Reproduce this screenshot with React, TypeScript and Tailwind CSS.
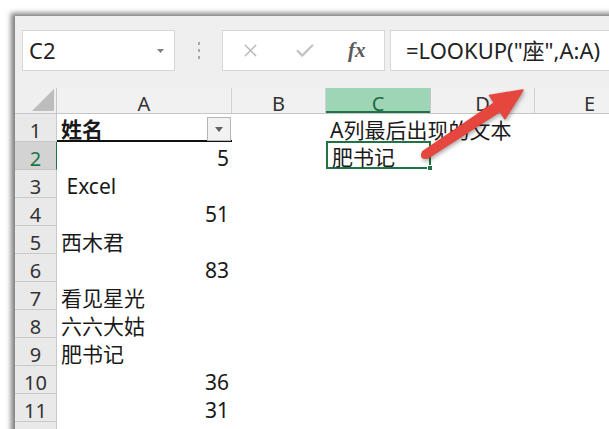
import React from 'react';
import { X, Check } from 'lucide-react';

type Row = { n: number; a?: string; aRight?: boolean; aBold?: boolean; c?: string };

const rows: Row[] = [
  { n: 1, a: '姓名', aBold: true, c: 'A列最后出现的文本' },
  { n: 2, a: '5', aRight: true, c: '肥书记' },
  { n: 3, a: ' Excel' },
  { n: 4, a: '51', aRight: true },
  { n: 5, a: '西木君' },
  { n: 6, a: '83', aRight: true },
  { n: 7, a: '看见星光' },
  { n: 8, a: '六六大姑' },
  { n: 9, a: '肥书记' },
  { n: 10, a: '36', aRight: true },
  { n: 11, a: '31', aRight: true },
];

const cols = [
  { key: 'A', w: 'w-[175px]' },
  { key: 'B', w: 'w-[94px]' },
  { key: 'C', w: 'w-[105px]' },
  { key: 'D', w: 'w-[104px]' },
  { key: 'E', w: 'w-[110px]' },
];

function FilterButton() {
  return (
    <div className="absolute right-[1px] top-[3px] w-[24px] h-[24px] bg-[#f2f2f2] border border-[#b4b4b4] flex items-center justify-center">
      <svg width="8" height="5" viewBox="0 0 8 5" aria-hidden="true">
        <polygon points="0,0 8,0 4,5" fill="#606060" />
      </svg>
    </div>
  );
}

function Arrow() {
  return (
    <svg
      className="absolute left-0 top-0 pointer-events-none drop-shadow-[1px_2px_2px_rgba(0,0,0,0.35)]"
      width="609"
      height="429"
      viewBox="0 0 609 429"
      aria-hidden="true">
      <polygon
        points="422.8,151.7 494.4,102.9 489.5,95.4 523,90 504.9,118.8 500,111.3 427.2,158.3"
        fill="#e5463d"
        stroke="#e5463d"
        strokeWidth="1.5"
        strokeLinejoin="round" />
      <circle cx="425" cy="155" r="4" fill="#e5463d" />
    </svg>
  );
}

export default function App() {
  return (
    <div className="relative w-[609px] h-[429px] overflow-hidden bg-white font-['Noto_Sans','Noto_Sans_CJK_SC',sans-serif] text-[#1a1a1a]">
      <div className="ml-[15px] mt-[16px] w-[640px] bg-[#efefef] shadow-[-3px_-2px_5px_1px_rgba(0,0,0,0.5)]">
        {/* Formula bar */}
        <div className="h-[72px] flex items-start pt-[14px] pl-[7px]">
          <div className="w-[153px] h-[41px] bg-white border border-[#d6d6d6] flex items-center justify-between pl-[6px] pr-[10px]">
            <span className="text-[22px] text-[#222]">C2</span>
            <svg width="7" height="4" viewBox="0 0 7 4" aria-hidden="true">
              <polygon points="0,0 7,0 3.5,4" fill="#808080" />
            </svg>
          </div>
          <div className="w-[47px] h-[41px] flex flex-col items-center justify-center gap-[4px]">
            <span className="w-[2px] h-[3px] bg-[#a8a8a8]" />
            <span className="w-[2px] h-[3px] bg-[#a8a8a8]" />
            <span className="w-[2px] h-[3px] bg-[#a8a8a8]" />
          </div>
          <div className="w-[163px] h-[41px] bg-white border border-[#d6d6d6] flex items-center pl-[17px]">
            <X size={21} strokeWidth={1.5} className="text-[#b3b3b3]" />
            <Check size={22} strokeWidth={2.6} className="text-[#c4c4c4] ml-[33px]" />
            <span className="ml-[32px] font-['Liberation_Serif',serif] italic font-bold text-[21px] text-[#5a5a5a]">fx</span>
          </div>
          <div className="ml-[5px] flex-1 h-[41px] bg-white border border-[#d6d6d6] flex items-center pl-[15px]">
            <span className="text-[22px] text-[#222] whitespace-nowrap">=LOOKUP("座",A:A)</span>
          </div>
        </div>

        {/* Column headers */}
        <div className="h-[26px] flex border-b border-[#c6c6c6]">
          <div className="w-[42px] h-full bg-[#efefef] border-r border-[#c6c6c6] flex items-end justify-end pr-[2px] pb-[2px]">
            <svg width="22" height="22" viewBox="0 0 22 22" aria-hidden="true">
              <polygon points="22,0 22,22 0,22" fill="#bdbdbd" />
            </svg>
          </div>
          {cols.map((col) => (
            <div
              key={col.key}
              className={`${col.w} h-full flex items-center justify-center pt-[7px] text-[20px] border-r ${
                col.key === 'C'
                  ? 'bg-[#9fd5b7] text-[#1e6b42] border-[#c6c6c6] shadow-[inset_0_-2px_0_#217346]'
                  : 'bg-[#f1f1f1] text-[#333] border-[#d2d2d2]'
              }`}>
              {col.key}
            </div>
          ))}
        </div>

        {/* Rows */}
        {rows.map((r) => (
          <div key={r.n} className="h-[28px] flex bg-white">
            <div
              className={`w-[42px] h-full flex items-center justify-center pt-[6px] text-[20px] border-b border-r ${
                r.n === 2
                  ? 'bg-[#d3d3d3] text-[#217346] border-b-[#c6c6c6] border-r-[#217346]'
                  : 'bg-[#e9e9e9] text-[#333] border-[#c9c9c9]'
              }`}>
              {r.n}
            </div>
            <div
              className={`relative w-[175px] h-full flex items-center pt-[6px] text-[21px] whitespace-pre ${
                r.aRight ? 'justify-end pr-[3px]' : 'pl-[4px]'
              } ${r.aBold ? 'font-bold border-b-2 border-[#111]' : ''}`}>
              {r.a}
              {r.n === 1 && <FilterButton />}
            </div>
            <div className="w-[94px] h-full" />
            <div
              className={`relative w-[105px] h-full flex items-center pl-[4px] pt-[6px] text-[21px] whitespace-nowrap ${
                r.n === 2 ? 'border-2 border-[#217346] -mt-[1px] h-[30px] pt-[5px]' : ''
              }`}>
              {r.c}
              {r.n === 2 && (
                <span className="absolute right-[-4px] bottom-[-4px] w-[6px] h-[6px] bg-[#217346] border border-white" />
              )}
            </div>
            <div className="w-[104px] h-full" />
            <div className="flex-1 h-full" />
          </div>
        ))}
        <div className="h-[28px] flex bg-white">
          <div className="w-[42px] h-full bg-[#e9e9e9] border-r border-[#c9c9c9]" />
        </div>
      </div>
      <Arrow />
    </div>
  );
}
